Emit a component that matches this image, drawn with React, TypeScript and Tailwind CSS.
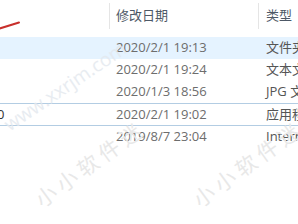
import React from "react";

const rows = [
  { name: "", date: "2020/2/1 19:13", type: "文件夹", hover: true },
  { name: "", date: "2020/2/1 19:24", type: "文本文档" },
  { name: "", date: "2020/1/3 18:56", type: "JPG 文件" },
  { name: "0", date: "2020/2/1 19:02", type: "应用程序", focus: true },
  { name: "", date: "2019/8/7 23:04", type: "Internet 快捷方式" },
];

const font = { fontFamily: '"Open Sans", "Noto Sans CJK SC", sans-serif' };

export default function App() {
  return (
    <div
      className="relative w-[298px] h-[224px] overflow-hidden bg-white text-[13px]"
      style={font}
    >
      {/* header */}
      <div className="flex h-[37px] items-start">
        <div className="relative w-[109px] h-full shrink-0">
          <svg className="absolute left-0 top-0" width="30" height="32">
            <line x1="-2" y1="29" x2="19" y2="22.5" stroke="#c8302c" strokeWidth="2" strokeLinecap="round" />
          </svg>
        </div>
        <div className="flex h-[26px] mt-[3px] w-[149px] shrink-0 items-center border-l border-[#e5e5e5] pl-[6px] text-[#4d5866]">
          修改日期
        </div>
        <div className="flex h-[26px] mt-[3px] flex-1 items-center border-l border-[#e5e5e5] pl-[7px] whitespace-nowrap text-[#4d5866]">
          类型
        </div>
      </div>

      {/* rows */}
      <div className="flex flex-col">
        {rows.map((r, i) => (
          <div
            key={i}
            className={
              "flex items-center whitespace-nowrap text-[#6d6d6d] " +
              (r.hover ? "bg-[#e5f3ff] " : "") +
              (r.focus ? "h-[23px] border-y border-[#b3cde3] " : "h-[22px] ")
            }
          >
            <div className="w-[109px] shrink-0 overflow-hidden text-[#333]">
              {r.name && <span className="-ml-[3px] inline-block">{r.name}</span>}
            </div>
            <div className="w-[149px] shrink-0 pl-[7px]">{r.date}</div>
            <div className="flex-1 pl-[8px] text-[#555]">{r.type}</div>
          </div>
        ))}
      </div>

      {/* watermarks */}
      <div className="pointer-events-none absolute left-[6px] top-[112px] origin-left -rotate-[34deg] whitespace-nowrap text-[19px] text-[#e3e8ee] opacity-80">
        www.xxrjm.com
      </div>
      <div className="pointer-events-none absolute left-[38px] top-[187px] origin-left -rotate-[36deg] whitespace-nowrap text-[21px] tracking-[5px] text-[#e8e8e8]">
        小小软件迷
      </div>
      <div className="pointer-events-none absolute left-[196px] top-[187px] origin-left -rotate-[36deg] whitespace-nowrap text-[21px] tracking-[5px] text-[#e8e8e8]">
        小小软件迷
      </div>
    </div>
  );
}
